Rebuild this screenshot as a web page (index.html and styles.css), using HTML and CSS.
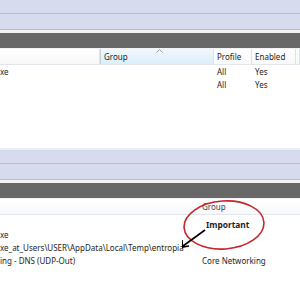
FILE: index.html
```html
<!DOCTYPE html>
<html lang="en">
<head>
<meta charset="UTF-8" />
<title>Firewall rules</title>
<link rel="stylesheet" href="styles.css">
</head>
<body>

<div class="pane pane-top">
  <div class="band band-a"></div>
  <div class="band band-b"></div>
  <div class="spacer"></div>
  <div class="title-bar"></div>
  <div class="spacer thin"></div>
  <div class="grid head">
    <div class="cell"></div>
    <div class="cell sorted">Group
      <svg class="sort" width="7" height="4" viewBox="0 0 7 4"><path d="M0.5 3.5 L3.5 0.5 L6.5 3.5" fill="none" stroke="#9aa3ad" stroke-width="1"/></svg>
    </div>
    <div class="cell">Profile</div>
    <div class="cell">Enabled</div>
    <div class="cell"></div>
  </div>
  <div class="grid row">
    <div class="cell">xe</div>
    <div class="cell"></div>
    <div class="cell">All</div>
    <div class="cell">Yes</div>
  </div>
  <div class="grid row">
    <div class="cell"></div>
    <div class="cell"></div>
    <div class="cell">All</div>
    <div class="cell">Yes</div>
  </div>
</div>

<div class="pane pane-bottom">
  <div class="fade"></div>
  <div class="band band-a"></div>
  <div class="band band-b"></div>
  <div class="spacer"></div>
  <div class="title-bar"></div>
  <div class="spacer thin"></div>
  <div class="grid2 head">
    <div class="cell"></div>
    <div class="cell">Group</div>
  </div>
  <div class="grid2 row first">
    <div class="cell">xe</div>
    <div class="cell"></div>
  </div>
  <div class="grid2 row">
    <div class="cell">xe_at_Users\USER\AppData\Local\Temp\entropia</div>
    <div class="cell"></div>
  </div>
  <div class="grid2 row">
    <div class="cell">ing - DNS (UDP-Out)</div>
    <div class="cell">Core Networking</div>
  </div>

  <!-- red marker drawn over the list -->
  <svg class="markup" width="100" height="60" viewBox="0 0 100 60">
    <ellipse cx="42" cy="25" rx="40" ry="24" transform="rotate(-4 42 25)" fill="none" stroke="#c4262b" stroke-width="1.6"/>
    <path d="M23 30 L1 46" stroke="#000" stroke-width="1.6" fill="none"/>
    <path d="M0 40 L0.5 47 L7 46" stroke="#000" stroke-width="1.6" fill="none"/>
  </svg>
  <div class="note">Important</div>
</div>

</body>
</html>
```

FILE: styles.css
```css
body {
  margin: 0;
  font-family: "Noto Sans", "Open Sans", sans-serif;
  font-size: 8px;
  color: #1e1e1e;
  background: #fff;
}

.pane {
  position: relative;
}

.pane-top {
  height: 148px;
}

.band {
  background: #d7dbee;
  border-bottom: 1px solid #b8bccb;
}

.band-a {
  height: 13px;
}

.band-b {
  height: 15px;
}

.spacer {
  height: 3px;
  background: #f3f3f6;
}

.spacer.thin {
  height: 1px;
}

.title-bar {
  height: 15px;
  background: #686868;
}

.fade {
  height: 2px;
  background: #eceef6;
}

.grid {
  display: grid;
  grid-template-columns: 100px 114px 38px 44px 4px;
}

.grid2 {
  display: grid;
  grid-template-columns: 202px 98px;
}

.head {
  height: 16px;
  line-height: 15px;
  background: linear-gradient(#ffffff, #f7f8fa);
  border-bottom: 1px solid #e3e6ea;
  box-sizing: border-box;
}

.grid.head .cell {
  border-right: 1px solid #dde2e8;
  padding-left: 3px;
  position: relative;
}

.grid.head .cell.sorted {
  background: linear-gradient(#f1f8fd, #dbeefb);
  border-left: 1px solid #c4d4e0;
}

.sort {
  position: absolute;
  left: 55px;
  top: 0;
}

.grid2.head .cell {
  color: #444;
}

.row {
  height: 13px;
  line-height: 13px;
  white-space: nowrap;
}

.grid.row .cell:nth-child(3),
.grid.row .cell:nth-child(4) {
  padding-left: 3px;
}

.grid2.row.first {
  margin-top: 13px;
}

.markup {
  position: absolute;
  left: 182px;
  top: 52px;
}

.note {
  position: absolute;
  left: 206px;
  top: 71px;
  font-weight: bold;
  font-size: 8.4px;
}
```
